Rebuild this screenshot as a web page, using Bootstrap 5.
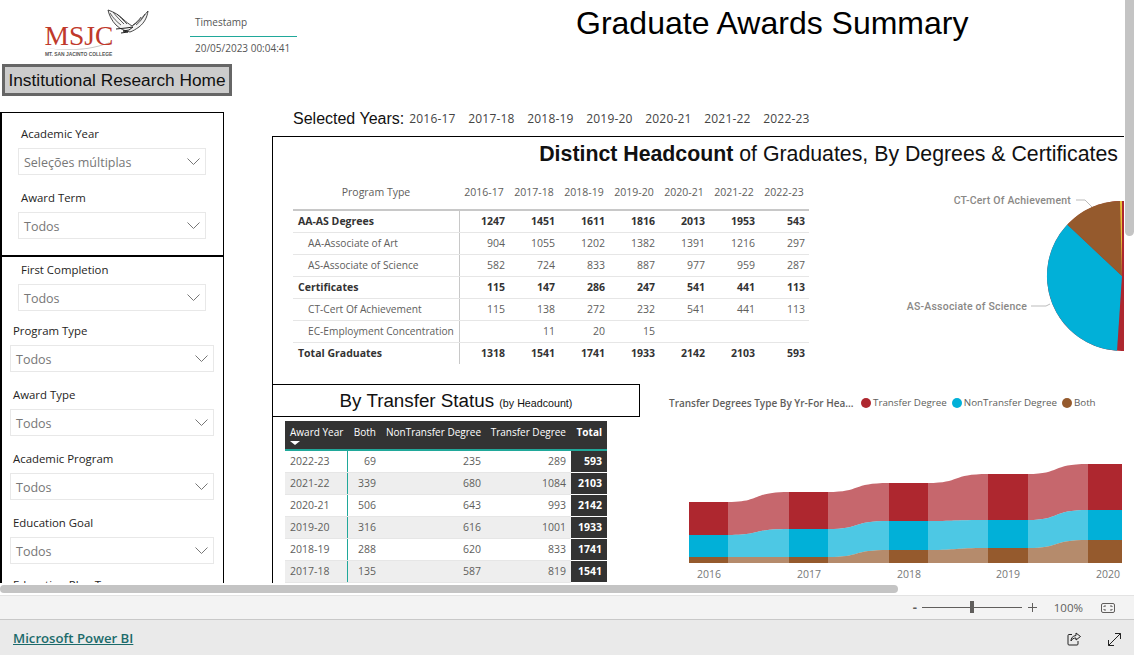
<!DOCTYPE html>
<html lang="en">
<head>
  <meta charset="UTF-8">
  <title>Graduate Awards Summary</title>
  <link href="https://cdn.jsdelivr.net/npm/bootstrap@5.3.3/dist/css/bootstrap.min.css" rel="stylesheet">
  <style>
    body { margin: 0; height: 655px; overflow: hidden; background: #fff; font-family: "Open Sans", "Noto Sans", sans-serif; color: #333; }
    .arial { font-family: "Liberation Sans", Arial, sans-serif; }
    .report-shell { height: 583px; }
    .report-canvas { width: 1124px; height: 583px; overflow: hidden; flex: none; }
    .vbar-track { width: 9px; margin-left: 1px; flex: none; }
    .vbar-thumb { height: 236px; background: #c4c4c4; border-radius: 0 0 5px 5px; }
    .head-row { height: 64px; }
    .stamp { width: 107px; flex: none; font-size: 10px; color: #555; }
    .stamp-label { padding: 14px 0 7px 5px; line-height: 16px; height: 37px; border-bottom: 1px solid #20a89a; }
    .stamp-value { padding: 3px 0 0 5px; line-height: 16px; }
    .page-title { margin: 4px 0 0 279px; font-size: 32px; line-height: 38px; font-weight: 400; color: #000; white-space: nowrap; }
    .left-col { width: 272px; flex: none; }
    .home-btn { display: block; width: 230px; height: 32px; margin: 0 0 16px 2px; padding: 0; border: 3px solid #666; border-radius: 0; background: #ccc; color: #111; font-size: 17.300px; line-height: 24px; white-space: nowrap; }
    .slicer-panel { width: 224px; border: 1px solid #000; border-left-width: 2px; }
    .panel-one { height: 144px; padding-top: 12px; }
    .panel-two { height: 340px; padding-top: 4px; }
    .slicer-a { margin: 0 17px 14px 16px; }
    .slicer-b { margin: 0 9px 14px 8px; }
    .slicer-first { margin-bottom: 11px; }
    .slicer-cut { margin-top: -2px; }
    .slicer-label { height: 18px; margin-bottom: 5px; padding-left: 3px; font-size: 11.400px; line-height: 18px; color: #252423; white-space: nowrap; }
    .slicer-drop { height: 27px; border: 1px solid #e8e8e8; padding: 4px 5px 0; font-size: 12.500px; color: #777; white-space: nowrap; }
    .slicer-drop svg { margin-top: -5px; }
    .right-col { width: 852px; flex: none; padding-top: 44px; }
    .selected-line { height: 20px; margin: 1px 0 7px; padding-left: 21px; line-height: 20px; }
    .selected-lbl { font-size: 16px; color: #111; margin-right: 5px; }
    .selected-yr { width: 59px; font-size: 12px; color: #444; letter-spacing: .2px; }
    .report-frame { border-left: 1px solid #000; border-top: 1px solid #000; }
    .headcount-title { height: 43px; padding: 5px 6px 0 0; font-size: 21.300px; line-height: 24px; color: #111; text-align: right; white-space: nowrap; }
    .headcount-row { height: 204px; }
    .matrix { width: 516px; margin: 0 0 0 20px; table-layout: fixed; border-collapse: collapse; font-size: 10.500px; color: #605e5c; flex: none; align-self: flex-start; }
    .matrix th, .matrix td { padding: 1px 4px 0 0; height: 22px; border-bottom: 1px solid #e6e6e6; text-align: right; white-space: nowrap; font-weight: 400; color: inherit; background: transparent; }
    .matrix thead th { height: 30px; padding: 0 0 4px 0; text-align: center; border-bottom: 2px solid #c8c8c8; }
    .matrix .name-cell { text-align: left; padding-left: 5px; border-right: 1px solid #c8c8c8; }
    .matrix .sub-cell { padding-left: 15px; font-size: 10.200px; }
    .matrix .bold-row td { font-weight: 700; color: #333; }
    .matrix tr:last-child td { border-bottom: 0; }
    .pie-svg { margin-left: auto; flex: none; }
    .pie-lbl { font-family: Roboto, sans-serif; font-size: 10.500px; font-weight: 500; letter-spacing: .2px; fill: #8a8886; }
    .lower-left { width: 368px; margin-left: -1px; flex: none; }
    .transfer-title { height: 33px; border: 1px solid #000; font-size: 18.800px; line-height: 31px; color: #111; text-align: center; white-space: nowrap; margin-bottom: 4px; }
    .transfer-title span { font-size: 10.700px; }
    .status-table { width: 322px; margin-left: 13px; table-layout: fixed; border-collapse: collapse; font-size: 10.500px; color: #605e5c; }
    .status-table th { height: 29px; padding: 4px 5px 0 0; background: #333; color: #fff; font-size: 10px; font-weight: 400; text-align: right; vertical-align: top; white-space: nowrap; border-bottom: 2px solid #20a89a; line-height: 15px; position: relative; }
    .status-table td { height: 22px; padding: 1px 5px 0 0; text-align: right; border-bottom: 1px solid #e6e6e6; white-space: nowrap; }
    .status-table tr.alt td { background: #eee; }
    .status-table .yr-cell { text-align: left; padding-left: 5px; border-right: 1px solid #20a89a; }
    .status-table th.yr-cell { border-right: 0; }
    .status-table td.total-cell { background: #333 !important; color: #fff; font-weight: 700; border-bottom: 1px solid #fff; }
    .status-table th.total-cell { font-weight: 700; }
    .sort-caret { position: absolute; left: 5px; top: 20px; border: 4px solid transparent; border-top: 4px solid #fff; border-left-width: 5px; border-right-width: 5px; }
    .lower-right { flex: 1 1 auto; min-width: 0; }
    .legend-line { height: 16px; margin-top: 11px; padding-left: 29px; font-size: 9.800px; line-height: 16px; color: #605e5c; white-space: nowrap; }
    .legend-title { font-size: 10px; font-weight: 600; margin-right: 4px; width: 188px; }
    .legend-dot { width: 10px; height: 10px; border-radius: 50%; margin-right: 2px; flex: none; }
    .legend-item { margin-right: 5px; }
    .chart-svg { display: block; margin-top: 9px; }
    .hbar-zone { height: 12px; padding-top: 2px; }
    .hbar-thumb { width: 898px; height: 8px; background: #c4c4c4; border-radius: 4px; }
    .zoom-bar { height: 24px; background: #f3f3f3; border-top: 1px solid #e3e3e3; padding-right: 19px; font-size: 11.500px; color: #605e5c; }
    .zoom-minus { width: 10px; text-align: center; font-weight: 700; font-size: 13px; }
    .zoom-line { width: 100px; height: 1px; margin: 0 6px 0 2px; background: #605e5c; }
    .zoom-thumb { left: 48px; top: -6px; width: 4px; height: 12px; background: #605e5c; }
    .zoom-pct { margin: 0 18px 0 17px; }
    .foot-bar { height: 37px; background: #eaeaea; border-top: 1px solid #c8c8c8; padding: 2px 13px 0; }
    .foot-link { color: #1c6b6b; font-size: 13.200px; font-weight: 600; }
    .foot-icons { gap: 27px; }
  </style>
</head>
<body>
  <div class="report-shell d-flex">
    <div class="report-canvas">
      <div class="head-row d-flex">
        <svg width="190" height="64" viewBox="0 0 190 64" class="flex-none">
          <path d="M108 10c6 2 11 5 15 9 3 3 6 5 9 7 5-3 11-9 16-15-1 7-4 12-9 16-3 2-6 4-9 5-5-1-10-3-14-7-4-4-7-10-8-15z" fill="#f4f4f4" stroke="#333" stroke-width=".9"/>
          <path d="M110 13c3 5 7 9 11 12M113 12c3 4 7 8 11 12M117 14c3 3 6 6 10 10M141 17c-2 3-5 6-8 8M145 14c-2 4-5 8-9 11" fill="none" stroke="#333" stroke-width=".8"/>
          <path d="M116 29l10-1 7-1-4 3-6 1 5 1-7 1" fill="none" stroke="#222" stroke-width="1"/>
          <path d="M45 48c25 3 50 1 67-7-14 9-42 11-67 7z" fill="#c6c6c6"/>
          <text x="44.500" y="45" font-family="Liberation Serif, serif" font-size="27.500" fill="#c0392b">MSJC</text>
          <text x="45" y="55.500" font-family="Liberation Sans, sans-serif" font-size="4.900" font-weight="700" fill="#555">MT. SAN JACINTO COLLEGE</text>
        </svg>
        <div class="stamp">
          <div class="stamp-label">Timestamp</div>
          <div class="stamp-value">20/05/2023 00:04:41</div>
        </div>
        <h1 class="page-title arial">Graduate Awards Summary</h1>
      </div>

      <div class="d-flex">
        <div class="left-col">
          <button type="button" class="btn home-btn arial">Institutional Research Home</button>
          <div class="slicer-panel panel-one">
            <div class="slicer-a">
              <div class="slicer-label">Academic Year</div>
              <div class="slicer-drop d-flex align-items-center justify-content-between">Seleções múltiplas <svg width="13" height="7" viewBox="0 0 13 7"><path d="M.5.5l6 6 6-6" fill="none" stroke="#777"/></svg></div>
            </div>
            <div class="slicer-a">
              <div class="slicer-label">Award Term</div>
              <div class="slicer-drop d-flex align-items-center justify-content-between">Todos <svg width="13" height="7" viewBox="0 0 13 7"><path d="M.5.5l6 6 6-6" fill="none" stroke="#777"/></svg></div>
            </div>
          </div>
          <div class="slicer-panel panel-two">
            <div class="slicer-a slicer-first">
              <div class="slicer-label">First Completion</div>
              <div class="slicer-drop d-flex align-items-center justify-content-between">Todos <svg width="13" height="7" viewBox="0 0 13 7"><path d="M.5.5l6 6 6-6" fill="none" stroke="#777"/></svg></div>
            </div>
            <div class="slicer-b">
              <div class="slicer-label">Program Type</div>
              <div class="slicer-drop d-flex align-items-center justify-content-between">Todos <svg width="13" height="7" viewBox="0 0 13 7"><path d="M.5.5l6 6 6-6" fill="none" stroke="#777"/></svg></div>
            </div>
            <div class="slicer-b">
              <div class="slicer-label">Award Type</div>
              <div class="slicer-drop d-flex align-items-center justify-content-between">Todos <svg width="13" height="7" viewBox="0 0 13 7"><path d="M.5.5l6 6 6-6" fill="none" stroke="#777"/></svg></div>
            </div>
            <div class="slicer-b">
              <div class="slicer-label">Academic Program</div>
              <div class="slicer-drop d-flex align-items-center justify-content-between">Todos <svg width="13" height="7" viewBox="0 0 13 7"><path d="M.5.5l6 6 6-6" fill="none" stroke="#777"/></svg></div>
            </div>
            <div class="slicer-b">
              <div class="slicer-label">Education Goal</div>
              <div class="slicer-drop d-flex align-items-center justify-content-between">Todos <svg width="13" height="7" viewBox="0 0 13 7"><path d="M.5.5l6 6 6-6" fill="none" stroke="#777"/></svg></div>
            </div>
            <div class="slicer-b slicer-cut">
              <div class="slicer-label">Education Plan Type</div>
            </div>
          </div>
        </div>

        <div class="right-col">
          <div class="selected-line d-flex align-items-center">
            <span class="selected-lbl arial">Selected Years:</span>
            <span class="selected-yr">2016-17</span>
            <span class="selected-yr">2017-18</span>
            <span class="selected-yr">2018-19</span>
            <span class="selected-yr">2019-20</span>
            <span class="selected-yr">2020-21</span>
            <span class="selected-yr">2021-22</span>
            <span class="selected-yr">2022-23</span>
          </div>

          <div class="report-frame">
            <div class="headcount-title arial"><b>Distinct Headcount</b> of Graduates, By Degrees &amp; Certificates</div>
            <div class="headcount-row d-flex">
              <table class="matrix">
                <colgroup><col style="width:166px"><col span="7" style="width:50px"></colgroup>
                <thead>
                  <tr><th>Program Type</th><th>2016-17</th><th>2017-18</th><th>2018-19</th><th>2019-20</th><th>2020-21</th><th>2021-22</th><th>2022-23</th></tr>
                </thead>
                <tbody>
                  <tr class="bold-row"><td class="name-cell">AA-AS Degrees</td><td>1247</td><td>1451</td><td>1611</td><td>1816</td><td>2013</td><td>1953</td><td>543</td></tr>
                  <tr><td class="name-cell sub-cell">AA-Associate of Art</td><td>904</td><td>1055</td><td>1202</td><td>1382</td><td>1391</td><td>1216</td><td>297</td></tr>
                  <tr><td class="name-cell sub-cell">AS-Associate of Science</td><td>582</td><td>724</td><td>833</td><td>887</td><td>977</td><td>959</td><td>287</td></tr>
                  <tr class="bold-row"><td class="name-cell">Certificates</td><td>115</td><td>147</td><td>286</td><td>247</td><td>541</td><td>441</td><td>113</td></tr>
                  <tr><td class="name-cell sub-cell">CT-Cert Of Achievement</td><td>115</td><td>138</td><td>272</td><td>232</td><td>541</td><td>441</td><td>113</td></tr>
                  <tr><td class="name-cell sub-cell">EC-Employment Concentration</td><td></td><td>11</td><td>20</td><td>15</td><td></td><td></td><td></td></tr>
                  <tr class="bold-row"><td class="name-cell">Total Graduates</td><td>1318</td><td>1541</td><td>1741</td><td>1933</td><td>2142</td><td>2103</td><td>593</td></tr>
                </tbody>
              </table>
              <svg class="pie-svg" width="314" height="204" viewBox="0 0 314 204">
                <circle cx="312" cy="96" r="75" fill="#ae272f"/>
                <path d="M312 96L257.300 44.600A75 75 0 0 0 307 170.800Z" fill="#01b0d8"/>
                <path d="M312 96L257.300 44.600A75 75 0 0 1 310 21Z" fill="#955a2d"/>
                <path d="M312 96L310 21A75 75 0 0 1 312 21Z" fill="#e8c33a"/>
                <path d="M266 20h9l7 7" fill="none" stroke="#bbb"/>
                <path d="M221 126h15l4-2" fill="none" stroke="#bbb"/>
                <text class="pie-lbl" x="261" y="24" text-anchor="end">CT-Cert Of Achievement</text>
                <text class="pie-lbl" x="217" y="130" text-anchor="end">AS-Associate of Science</text>
              </svg>
            </div>
            <div class="d-flex">
              <div class="lower-left">
                <div class="transfer-title arial">By Transfer Status <span>(by Headcount)</span></div>
                <table class="status-table">
                  <colgroup><col style="width:62px"><col style="width:34px"><col style="width:105px"><col style="width:85px"><col style="width:36px"></colgroup>
                  <thead>
                    <tr><th class="yr-cell">Award Year<span class="sort-caret"></span></th><th>Both</th><th>NonTransfer Degree</th><th>Transfer Degree</th><th class="total-cell">Total</th></tr>
                  </thead>
                  <tbody>
                    <tr><td class="yr-cell">2022-23</td><td>69</td><td>235</td><td>289</td><td class="total-cell">593</td></tr>
                    <tr class="alt"><td class="yr-cell">2021-22</td><td>339</td><td>680</td><td>1084</td><td class="total-cell">2103</td></tr>
                    <tr><td class="yr-cell">2020-21</td><td>506</td><td>643</td><td>993</td><td class="total-cell">2142</td></tr>
                    <tr class="alt"><td class="yr-cell">2019-20</td><td>316</td><td>616</td><td>1001</td><td class="total-cell">1933</td></tr>
                    <tr><td class="yr-cell">2018-19</td><td>288</td><td>620</td><td>833</td><td class="total-cell">1741</td></tr>
                    <tr class="alt"><td class="yr-cell">2017-18</td><td>135</td><td>587</td><td>819</td><td class="total-cell">1541</td></tr>
                    <tr><td class="yr-cell"></td><td></td><td></td><td></td><td class="total-cell"></td></tr>
                  </tbody>
                </table>
              </div>
              <div class="lower-right">
                <div class="legend-line d-flex align-items-center">
                  <span class="legend-title">Transfer Degrees Type By Yr-For Hea...</span>
                  <span class="legend-dot" style="background:#ae272f"></span><span class="legend-item">Transfer Degree</span>
                  <span class="legend-dot" style="background:#01b0d8"></span><span class="legend-item">NonTransfer Degree</span>
                  <span class="legend-dot" style="background:#955a2d"></span><span class="legend-item">Both</span>
                </div>
                <svg id="area-chart" width="484" height="163" viewBox="640 420 484 163" class="chart-svg"></svg>
              </div>
            </div>
          </div>
        </div>
      </div>
    </div>
    <div class="vbar-track"><div class="vbar-thumb"></div></div>
  </div>

  <div class="hbar-zone"><div class="hbar-thumb"></div></div>
  <div class="zoom-bar d-flex align-items-center justify-content-end">
    <span class="zoom-minus">-</span>
    <span class="zoom-line position-relative"><span class="zoom-thumb position-absolute"></span></span>
    <svg width="9" height="9" viewBox="0 0 9 9"><path d="M0 4.500h9M4.500 0v9" stroke="#605e5c"/></svg>
    <span class="zoom-pct">100%</span>
    <svg width="14" height="10" viewBox="0 0 14 10"><rect x=".5" y=".5" width="13" height="9" rx="1.500" fill="none" stroke="#605e5c"/><path d="M3 4V3h2M9 3h2v1M3 6v1h2M9 7h2V6" fill="none" stroke="#605e5c"/></svg>
  </div>
  <div class="foot-bar d-flex align-items-center justify-content-between">
    <a href="#" class="foot-link">Microsoft Power BI</a>
    <div class="foot-icons d-flex align-items-center">
      <svg width="14" height="14" viewBox="0 0 14 14"><path d="M5 2.500H2a1 1 0 0 0-1 1V12a1 1 0 0 0 1 1h8a1 1 0 0 0 1-1V9" fill="none" stroke="#222"/><path d="M9 1l4.500 3.500L9 8V6C6.500 6 5 7 4 9c0-3 1.500-5 5-5.500z" fill="none" stroke="#222"/></svg>
      <svg width="13" height="13" viewBox="0 0 13 13"><path d="M.5 12.500l12-12M7 .5h5.500V6M.5 7v5.500H6" fill="none" stroke="#222"/></svg>
    </div>
  </div>

  <script src="https://cdn.jsdelivr.net/npm/bootstrap@5.3.3/dist/js/bootstrap.bundle.min.js"></script>
  <script>
    // band tops per year: red, cyan, brown, base line
    const bars = [
      { x0: 689, x1: 728, y: [502, 535, 557], label: '2016', lx: 709 },
      { x0: 789, x1: 828, y: [492, 529, 557], label: '2017', lx: 809 },
      { x0: 889, x1: 928, y: [483, 521, 550], label: '2018', lx: 909 },
      { x0: 988, x1: 1028, y: [474, 520, 548], label: '2019', lx: 1008 },
      { x0: 1088, x1: 1122, y: [464, 510, 540], label: '2020', lx: 1108 }
    ];
    const BASE = 563;
    const colors = ['#ae272f', '#01b0d8', '#955a2d'];

    function curve(x0, y0, x1, y1) {
      const w = x1 - x0;
      return `C${x0 + w * .55} ${y0} ${x0 + w * .38} ${y1} ${x1} ${y1}`;
    }
    function curveBack(x1, y1, x0, y0) {
      const w = x1 - x0;
      return `C${x0 + w * .38} ${y1} ${x0 + w * .55} ${y0} ${x0} ${y0}`;
    }

    let out = '';
    bars.forEach((b, i) => {
      const next = bars[i + 1];
      colors.forEach((c, k) => {
        const low = k < 2 ? b.y[k + 1] : BASE;
        out += `<rect x="${b.x0}" y="${b.y[k]}" width="${b.x1 - b.x0}" height="${low - b.y[k]}" fill="${c}"/>`;
        if (next) {
          const nextLow = k < 2 ? next.y[k + 1] : BASE;
          out += `<path d="M${b.x1} ${b.y[k]}${curve(b.x1, b.y[k], next.x0, next.y[k])}L${next.x0} ${nextLow}${curveBack(next.x0, nextLow, b.x1, low)}Z" fill="${c}" fill-opacity=".7"/>`;
        }
      });
      out += `<text x="${b.lx}" y="578" text-anchor="middle" font-size="10.5" fill="#777">${b.label}</text>`;
    });
    document.getElementById('area-chart').innerHTML = out;
  </script>
</body>
</html>
